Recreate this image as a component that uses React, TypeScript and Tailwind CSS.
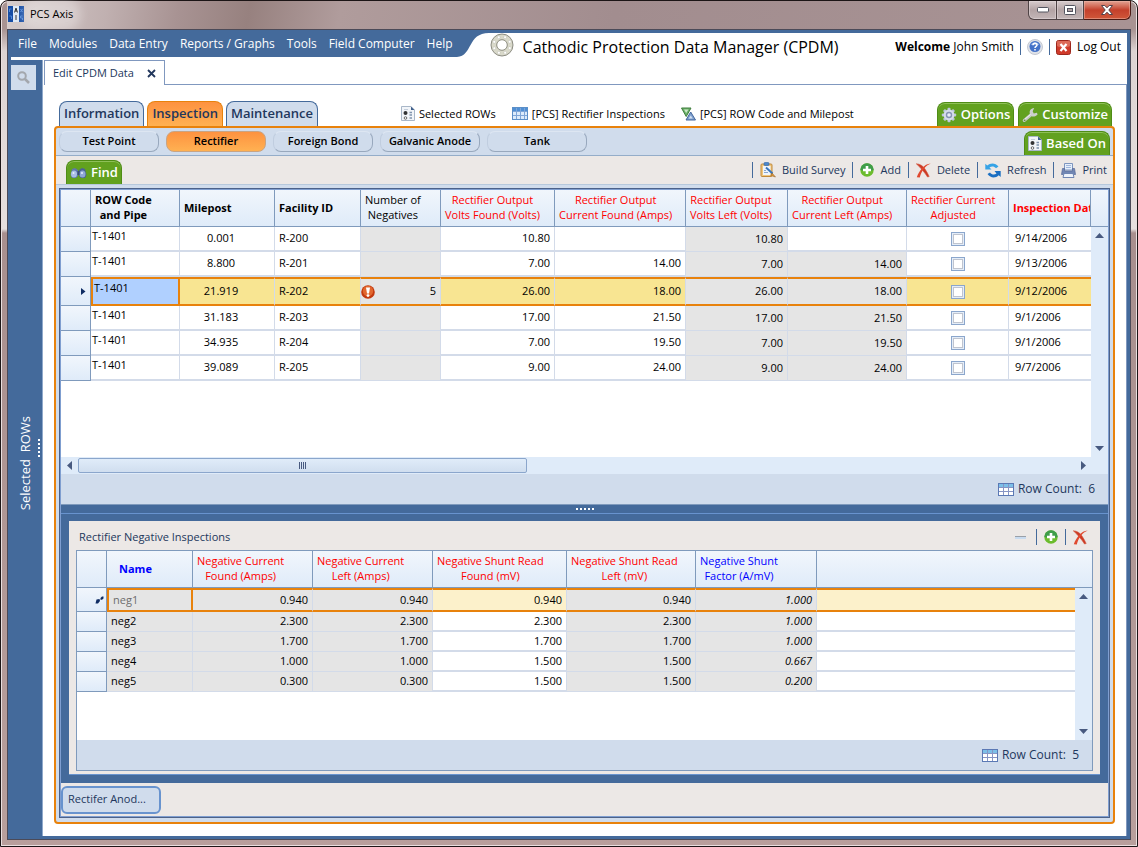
import { useState } from 'react';
import type { ReactNode } from 'react';
import clsx from 'clsx';

type Inspection = {
  row: string;
  milepost: string;
  facility: string;
  negatives?: number;
  voltsFound: string;
  currentFound: string;
  voltsLeft: string;
  currentLeft: string;
  date: string;
};

const INSPECTIONS: Inspection[] = [
  { row: 'T-1401', milepost: '0.001', facility: 'R-200', voltsFound: '10.80', currentFound: '', voltsLeft: '10.80', currentLeft: '', date: '9/14/2006' },
  { row: 'T-1401', milepost: '8.800', facility: 'R-201', voltsFound: '7.00', currentFound: '14.00', voltsLeft: '7.00', currentLeft: '14.00', date: '9/13/2006' },
  { row: 'T-1401', milepost: '21.919', facility: 'R-202', negatives: 5, voltsFound: '26.00', currentFound: '18.00', voltsLeft: '26.00', currentLeft: '18.00', date: '9/12/2006' },
  { row: 'T-1401', milepost: '31.183', facility: 'R-203', voltsFound: '17.00', currentFound: '21.50', voltsLeft: '17.00', currentLeft: '21.50', date: '9/1/2006' },
  { row: 'T-1401', milepost: '34.935', facility: 'R-204', voltsFound: '7.00', currentFound: '19.50', voltsLeft: '7.00', currentLeft: '19.50', date: '9/1/2006' },
  { row: 'T-1401', milepost: '39.089', facility: 'R-205', voltsFound: '9.00', currentFound: '24.00', voltsLeft: '9.00', currentLeft: '24.00', date: '9/7/2006' },
];

const NEGATIVES = [
  { name: 'neg1', values: ['0.940', '0.940', '0.940', '0.940'], factor: '1.000' },
  { name: 'neg2', values: ['2.300', '2.300', '2.300', '2.300'], factor: '1.000' },
  { name: 'neg3', values: ['1.700', '1.700', '1.700', '1.700'], factor: '1.000' },
  { name: 'neg4', values: ['1.000', '1.000', '1.500', '1.500'], factor: '0.667' },
  { name: 'neg5', values: ['0.300', '0.300', '1.500', '1.500'], factor: '0.200' },
];

const MENU = ['File', 'Modules', 'Data Entry', 'Reports / Graphs', 'Tools', 'Field Computer', 'Help'];
const SUB_TABS = ['Test Point', 'Rectifier', 'Foreign Bond', 'Galvanic Anode', 'Tank'];

const MAIN_HEADERS: { lines: string[]; className: string }[] = [
  { lines: ['ROW Code', 'and Pipe'], className: 'pl-1 font-bold' },
  { lines: ['Milepost'], className: 'pl-1 font-bold' },
  { lines: ['Facility ID'], className: 'pl-1 font-bold' },
  { lines: ['Number of', 'Negatives'], className: 'pl-1 font-normal' },
  { lines: ['Rectifier Output', 'Volts Found (Volts)'], className: 'pl-1 font-normal text-[#ff0000]' },
  { lines: ['Rectifier Output', 'Current Found (Amps)'], className: 'pl-1 font-normal text-[#ff0000]' },
  { lines: ['Rectifier Output', 'Volts Left (Volts)'], className: 'pl-1 font-normal text-[#ff0000]' },
  { lines: ['Rectifier Output', 'Current Left (Amps)'], className: 'pl-1 font-normal text-[#ff0000]' },
  { lines: ['Rectifier Current', 'Adjusted'], className: 'pl-1 font-normal text-[#ff0000]' },
  { lines: ['Inspection Date'], className: 'pl-1 font-bold text-[#ff0000]' },
];

const NEG_HEADERS: { lines: string[]; className: string }[] = [
  { lines: ['Name'], className: 'pl-3 font-bold text-[#0000ff]' },
  { lines: ['Negative Current', 'Found (Amps)'], className: 'pl-1 font-normal text-[#ff0000]' },
  { lines: ['Negative Current', 'Left (Amps)'], className: 'pl-1 font-normal text-[#ff0000]' },
  { lines: ['Negative Shunt Read', 'Found (mV)'], className: 'pl-1 font-normal text-[#ff0000]' },
  { lines: ['Negative Shunt Read', 'Left (mV)'], className: 'pl-1 font-normal text-[#ff0000]' },
  { lines: ['Negative Shunt', 'Factor (A/mV)'], className: 'pl-1 font-normal text-[#0000ff]' },
];

const headCell = 'h-[37px] border-r border-b border-[#7f9abc] bg-linear-to-b from-[#f1f6fc] to-[#dfebf9] py-0 pr-0 text-left';
const rowHead = 'border-r border-b border-[#7f9abc] bg-linear-to-b from-[#f1f6fc] to-[#dfebf9] p-0 text-right';
const greenTab = 'flex h-6 items-center gap-1 rounded-t-lg border border-b-0 border-[#4f8c16] bg-[#62a11f] px-[3px] text-[13px] font-semibold text-white shadow-[inset_0_1px_0_#8fc058]';

const selectedY = 'border-y-2 border-y-[#e8820c]';
const sideLine = 'border-r border-r-[#d3dbe9]';

/* Icons */

function AppIcon() {
  return (
    <svg width="16" height="16" viewBox="0 0 16 16">
      <rect width="5" height="16" y="0" fill="#174da4" />
      <rect width="6" height="16" x="5" fill="#dfe9f5" />
      <rect width="5" height="16" x="11" fill="#174da4" />
      <path d="M1.5 3h2M1.5 3v3M1.5 10h2v3M12.5 3l2 3M14.5 3l-2 3M14.5 10h-2v2h2v2" stroke="#4f87d8" fill="none" />
      <path d="M6.5 6.500 8 2l1.500 4.500M7 5h2M8 9v5" stroke="#333" fill="none" />
    </svg>
  );
}

function FlangeIcon() {
  const bolts = [0, 45, 90, 135, 180, 225, 270, 315];
  return (
    <svg width="24" height="24" viewBox="0 0 24 24" className="shrink-0">
      <circle cx="12" cy="12" r="11" fill="#d9d9ca" stroke="#8d8d83" />
      <circle cx="12" cy="12" r="5.300" fill="#fff" stroke="#8c8c80" />
      {bolts.map((a) => (
        <circle key={a} cx="12" cy="3.700" r="1.400" fill="#fff" stroke="#b5b5aa" strokeWidth=".4" transform={`rotate(${a + 22} 12 12)`} />
      ))}
    </svg>
  );
}

function SheetIcon() {
  return (
    <svg width="14" height="15" viewBox="0 0 14 15">
      <path d="M.5.500h9.500l3.500 3.500v10.500H.5z" fill="#f2f5f9" stroke="#a9b7c8" />
      <path d="M10 .5v3.500h3.500z" fill="#3f5f8a" />
      <circle cx="4.500" cy="7" r="2" fill="#333" />
      <circle cx="4.500" cy="12" r="1.300" fill="#fff" stroke="#666" />
      <path d="M3 3.500h4" stroke="#c4cedb" />
      <path d="M8.500 6.500h2.500M8.500 9h2.500M8.500 12h2.500" stroke="#8094ad" strokeWidth="1.500" />
    </svg>
  );
}

function GridIcon() {
  return (
    <svg width="16" height="13" viewBox="0 0 16 13">
      <rect x=".5" y=".5" width="15" height="12" fill="#fff" stroke="#5b79b5" />
      <rect x="1" y="1" width="14" height="3" fill="#7cbfe8" />
      <path d="M1 4.500h14M1 8.500h14M5.500 1v11M10.500 1v11" stroke="#8795c4" />
    </svg>
  );
}

function BlueGridIcon() {
  return (
    <svg width="16" height="13" viewBox="0 0 16 13">
      <rect x=".5" y=".5" width="15" height="12" fill="#dcebfb" stroke="#5b8fc8" />
      <rect x="1" y="1" width="14" height="3" fill="#4f8fd4" />
      <path d="M1 4.500h14M1 8.500h14M4.500 1v11M8.500 1v11M12.500 1v11" stroke="#7fa6d8" />
    </svg>
  );
}

function TrianglesIcon() {
  return (
    <svg width="15" height="14" viewBox="0 0 15 14">
      <path d="M.5 1h9.500L5.200 9.500z" fill="#6cb26a" stroke="#3f7d3c" />
      <path d="M3 2.500h4.500L5.200 6z" fill="#cfe8c8" />
      <path d="M9.700 5l4.800 8H5z" fill="#7ea0cf" stroke="#44679c" />
      <path d="M9.700 8.500l2 3h-4z" fill="#d3e0f2" />
    </svg>
  );
}

function GearIcon() {
  return (
    <svg width="16" height="16" viewBox="0 0 16 16">
      <g fill="#bcc6dc">
        {[0, 45, 90, 135].map((a) => (
          <rect key={a} x="6.500" y=".8" width="3" height="14.400" rx="1" transform={`rotate(${a} 8 8)`} />
        ))}
        <circle cx="8" cy="8" r="5.400" fill="#d5dceb" />
      </g>
      <circle cx="8" cy="8" r="3.200" fill="#8593b4" />
      <circle cx="8" cy="8" r="1.800" fill="#e8edf6" />
    </svg>
  );
}

function WrenchIcon() {
  return (
    <svg width="16" height="16" viewBox="0 0 16 16">
      <path d="M2.200 13.500l6.500-5.500" stroke="#c2c6c2" strokeWidth="3" strokeLinecap="round" />
      <path d="M12.200 1C8.500 1.500 7 4 8 7s4 3.500 7.500.7l-.5-1.900-3.300.7-1-2.300z" fill="#ccd0cc" />
      <path d="M2.500 12.500l6-5" stroke="#eef0ee" />
      <circle cx="2.700" cy="13.200" r=".8" fill="#5c8c2c" />
    </svg>
  );
}

function BinocularsIcon() {
  return (
    <svg width="17" height="12" viewBox="0 0 17 12">
      <path d="M2 2l3-1 3 2v6L6 11H2L.5 8z" fill="#5f78ab" />
      <path d="M15 2l-3-1-3 2v6l2 2h4l1.500-3z" fill="#4a6296" />
      <ellipse cx="4" cy="7" rx="3" ry="3.500" fill="#a9bfe6" />
      <ellipse cx="12.500" cy="7" rx="3" ry="3.500" fill="#8fa8d6" />
      <circle cx="3.500" cy="6" r="1" fill="#e8f0fc" />
      <circle cx="12" cy="6" r="1" fill="#e8f0fc" />
      <rect x="7.500" y="4" width="2" height="4" fill="#394e73" />
    </svg>
  );
}

function SurveyIcon() {
  return (
    <svg width="16" height="16" viewBox="0 0 16 16">
      <rect x="1" y="2" width="11" height="12.500" rx="1" fill="#f0c67c" stroke="#c08a3c" />
      <rect x="3" y="4" width="7.500" height="9" fill="#eff5fd" />
      <rect x="4" y=".5" width="5" height="3" rx="1" fill="#4b87cc" stroke="#2f66a8" strokeWidth=".6" />
      <path d="M4 10.500h4M4 8.500h2" stroke="#8ba7cd" />
      <path d="M6 5.500l6.500 6" stroke="#3976bd" strokeWidth="2" />
      <path d="M12 11l3.500 4-4.800-1.500z" fill="#e09a3d" stroke="#8a5a20" strokeWidth=".5" />
    </svg>
  );
}

function AddIcon() {
  return (
    <svg width="14" height="14" viewBox="0 0 14 14">
      <circle cx="7" cy="7" r="6.700" fill="#6cbc2d" />
      <path d="M.3 7a6.700 6.700 0 0 1 13.400 0c-4 1.500-9 1.500-13.400 0z" fill="#3f9d4a" />
      <path d="M7 3v8M3 7h8" stroke="#fff" strokeWidth="2.600" />
    </svg>
  );
}

function DeleteIcon() {
  return (
    <svg width="15" height="15" viewBox="0 0 15 15">
      <path d="M.3.800C4 .800 7 3 9 6c1.800 2.800 3 5 4.200 7.500l-1.700.5C9 10 5 5 .3.800z" fill="#cc3a24" stroke="#d4553e" strokeWidth=".6" />
      <path d="M14.800.600C9.500 2.500 5.500 8 3.800 14.500L.8 14.200C3.500 7.500 8 1 14.800.600z" fill="#e0492f" />
    </svg>
  );
}

function RefreshIcon() {
  return (
    <svg width="16" height="15" viewBox="0 0 16 15">
      <path d="M.3 6.500V.800l1.900 1.700C5.500-.500 10.500-.300 13.500 3.500L11 5.200C9 3 6.500 2.900 4.500 4.500l2 2z" fill="#36a3e6" />
      <path d="M15.700 8v6l-2-1.800C10.500 15.500 5.500 15.200 2.500 11L5 9.500c2 2.500 4.500 2.500 6.500 1L9.500 8z" fill="#1b6fc2" />
    </svg>
  );
}

function PrintIcon() {
  return (
    <svg width="15" height="15" viewBox="0 0 15 15">
      <path d="M3.500.500h8V7h-8z" fill="#e6effb" stroke="#7d95be" />
      <path d="M1.500 5.500h2v2.500h8V5.500h2l1 6h-14z" fill="#7287b4" stroke="#55699a" strokeWidth=".7" />
      <path d="M3 10.500h9l1 4H2z" fill="#eef3fb" stroke="#6f86b3" />
      <path d="M5 2.500h5M5 4.500h5" stroke="#9fb6dc" />
    </svg>
  );
}

function HelpIcon() {
  return (
    <svg width="16" height="16" viewBox="0 0 16 16">
      <circle cx="8" cy="8" r="7.500" fill="#dfe2e8" stroke="#c4c8d1" />
      <circle cx="8" cy="7.500" r="5.500" fill="#4472c8" />
      <path d="M3.500 6a5 5 0 0 1 9 0z" fill="#86a8e4" />
      <path d="M6 6.300c0-2.700 4-2.700 4-.3C10 7.500 8 7.300 8 9M8 10v1.400" stroke="#fff" strokeWidth="1.500" fill="none" />
    </svg>
  );
}

function LogOutIcon() {
  return (
    <svg width="15" height="15" viewBox="0 0 15 15">
      <rect x=".5" y=".5" width="14" height="14" rx="2" fill="#cf3a2a" stroke="#9d271c" />
      <path d="M1 2a1 1 0 0 1 1-1h11a1 1 0 0 1 1 1v4c-4 2-9 2-13 0z" fill="#de6a58" />
      <path d="M4.500 4l6 7M10.500 4l-6 7" stroke="#fff" strokeWidth="2.200" />
    </svg>
  );
}

function AlertIcon() {
  return (
    <svg width="14" height="14" viewBox="0 0 14 14">
      <circle cx="7" cy="7" r="6.800" fill="#c23a10" />
      <circle cx="7" cy="6" r="5.200" fill="#e2672f" />
      <path d="M5 2.500h4L8 8.500H6z" fill="#fff" />
      <circle cx="7" cy="10.600" r="1.400" fill="#fff" />
    </svg>
  );
}

function PencilMark() {
  return (
    <svg width="9" height="8" viewBox="0 0 9 8" className="mr-0.5 ml-auto">
      <path d="M5.500 2l1.500-1.500h1.500v2L7 3.800H5.500zM.5 7.500l1-4 3-.5.500 2L3 7.500z" fill="#0f2c63" />
    </svg>
  );
}

function Arrow({ dir }: { dir: 'up' | 'down' | 'left' | 'right' }) {
  const paths = { up: 'M0 7l4.500-5L9 7z', down: 'M0 2h9L4.500 7z', left: 'M7 0v9L2 4.500z', right: 'M2 0v9l5-4.500z' };
  return (
    <svg width="9" height="9" viewBox="0 0 9 9">
      <path d={paths[dir]} fill="#485a80" />
    </svg>
  );
}

/* Small pieces */

function Separator() {
  return <span className="h-4 w-px bg-[#446a9b]" />;
}

function ToolButton({ icon, children }: { icon: ReactNode; children: ReactNode }) {
  return (
    <button className="flex items-center gap-1.5 hover:underline">
      {icon}
      {children}
    </button>
  );
}

function HeaderCell({ lines, className }: { lines: string[]; className: string }) {
  return (
    <th className={clsx(headCell, 'overflow-hidden whitespace-nowrap', className)}>
      <span className="inline-block text-center">
        {lines.map((line) => <span key={line} className="block leading-[15px]">{line}</span>)}
      </span>
    </th>
  );
}

function RowCount({ count }: { count: number }) {
  return (
    <div className="flex h-[30px] items-center justify-end gap-1 bg-[#d0dcec] px-[13px] text-[12px] text-[#22375c]">
      <GridIcon />
      <span>Row Count:&nbsp; {count}</span>
    </div>
  );
}

function VerticalScroll() {
  return (
    <div className="flex w-[17px] shrink-0 flex-col">
      <div className="h-[37px] border-b border-[#7f9abc] bg-linear-to-b from-[#f1f6fc] to-[#dfebf9]" />
      <div className="flex flex-1 flex-col items-center justify-between bg-[#dfebf9] py-1">
        <button aria-label="Scroll up"><Arrow dir="up" /></button>
        <button aria-label="Scroll down"><Arrow dir="down" /></button>
      </div>
    </div>
  );
}

function MainGrid() {
  const [selected, setSelected] = useState(2);

  return (
    <div className="flex flex-1 bg-white">
      <div className="min-w-0 flex-1 overflow-hidden">
        <table className="w-full table-fixed border-separate border-spacing-0 text-[11px] text-black">
          <colgroup>
            <col className="w-[30px]" />
            <col className="w-[89px]" />
            <col className="w-[95px]" />
            <col className="w-[86px]" />
            <col className="w-[80px]" />
            <col className="w-[114px]" />
            <col className="w-[131px]" />
            <col className="w-[102px]" />
            <col className="w-[119px]" />
            <col className="w-[102px]" />
            <col />
          </colgroup>
          <thead>
            <tr>
              <th className={headCell} />
              {MAIN_HEADERS.map((h) => <HeaderCell key={h.lines.join()} {...h} />)}
            </tr>
          </thead>
          <tbody>
            {INSPECTIONS.map((r, i) => {
              const on = i === selected;
              const open = on ? `${selectedY} bg-[#f8e592]` : 'border-b-2 border-b-[#d3dbe9] bg-white';
              const locked = on ? `${selectedY} bg-[#e5e5e5]` : 'border-b border-b-[#d3dbe9] bg-[#e5e5e5]';
              return (
                <tr key={r.facility} onClick={() => setSelected(i)} className={on ? 'h-[29px]' : 'h-[25px]'}>
                  <td className={rowHead}>
                    {on && <svg width="5" height="7" viewBox="0 0 5 7" className="mr-1 ml-auto"><path d="M0 0v7l4.500-3.500z" fill="#0f2c63" /></svg>}
                  </td>
                  <td className={clsx('py-px pr-0 pl-px align-top leading-4', on ? 'border-2 border-[#e8820c] bg-[#b0d0ff]' : `${open} ${sideLine}`)}>{r.row}</td>
                  <td className={clsx('p-0 pr-3 text-center', sideLine, open)}>{r.milepost}</td>
                  <td className={clsx('p-0 pl-1', sideLine, open)}>{r.facility}</td>
                  <td className={clsx('p-0 pr-1', sideLine, locked)}>
                    {r.negatives && <span className="flex items-center justify-between"><AlertIcon />{r.negatives}</span>}
                  </td>
                  <td className={clsx('p-0 pr-1 text-right', sideLine, open)}>{r.voltsFound}</td>
                  <td className={clsx('p-0 pr-1 text-right', sideLine, open)}>{r.currentFound}</td>
                  <td className={clsx('p-0 pr-1 text-right', sideLine, locked)}>{r.voltsLeft}</td>
                  <td className={clsx('p-0 pr-1 text-right', sideLine, r.currentLeft ? locked : open)}>{r.currentLeft}</td>
                  <td className={clsx('p-0 text-center', sideLine, open)}>
                    <input
                      type="checkbox"
                      aria-label={`Rectifier current adjusted ${r.facility}`}
                      className="m-auto block h-[14px] w-[14px] appearance-none border border-[#8ba6cc] bg-white shadow-[inset_0_0_0_1px_#e4edf8,inset_0_0_0_2px_#bfc4cf] checked:bg-[#446a9b]"
                    />
                  </td>
                  <td className={clsx('p-0 pl-1.5', open)}>{r.date}</td>
                </tr>
              );
            })}
          </tbody>
        </table>
      </div>
      <VerticalScroll />
    </div>
  );
}

function NegativesGrid() {
  return (
    <div className="flex bg-white">
      <div className="min-w-0 flex-1 overflow-hidden pb-12">
        <table className="w-full table-fixed border-separate border-spacing-0 text-[11px] text-black">
          <colgroup>
            <col className="w-[30px]" />
            <col className="w-[86px]" />
            <col className="w-[120px]" />
            <col className="w-[120px]" />
            <col className="w-[134px]" />
            <col className="w-[129px]" />
            <col className="w-[121px]" />
            <col />
          </colgroup>
          <thead>
            <tr>
              <th className={headCell} />
              {NEG_HEADERS.map((h) => <HeaderCell key={h.lines.join()} {...h} />)}
              <th className="border-b border-[#7f9abc] bg-linear-to-b from-[#f1f6fc] to-[#dfebf9]" />
            </tr>
          </thead>
          <tbody>
            {NEGATIVES.map((n, i) => {
              const on = i === 0;
              const open = on ? `${selectedY} bg-[#fcf1cb]` : 'border-b-2 border-b-[#d3dbe9] bg-white';
              const locked = on ? `${selectedY} bg-[#e5e5e5]` : 'border-b border-b-[#d3dbe9] bg-[#e5e5e5]';
              return (
                <tr key={n.name} className={on ? 'h-6' : 'h-5'}>
                  <td className={rowHead}>{on && <PencilMark />}</td>
                  <td className={clsx('p-0 pl-1', on ? 'border-2 border-[#e8820c] bg-[#e5e5e5] text-[#6d6d6d]' : `${locked} ${sideLine}`)}>{n.name}</td>
                  {n.values.map((v, c) => (
                    <td key={c} className={clsx('p-0 pr-1 text-right', sideLine, c === 2 ? open : locked)}>{v}</td>
                  ))}
                  <td className={clsx('p-0 pr-1 text-right italic', sideLine, locked)}>{n.factor}</td>
                  <td className={clsx('p-0', open)} />
                </tr>
              );
            })}
          </tbody>
        </table>
      </div>
      <VerticalScroll />
    </div>
  );
}

function TitleBar() {
  const button = 'flex items-center justify-center border border-t-0 border-[#4f4345] bg-linear-to-b from-[#d8cccd] via-[#b3a3a4] to-[#c3b6b7] shadow-[inset_0_0_0_1px_#e5dcdd80]';
  return (
    <div className="flex h-7 items-start justify-between bg-[linear-gradient(100deg,#d6cccb_0,#c0b0b0_100px,#a89393_170px,#97817f_240px,#b09c9c_330px,#a28d8f_600px,#a89394_100%)] pl-px">
      <div className="flex items-center gap-[6px] pt-[5px] text-[11px] text-black">
        <AppIcon />
        <span className="rounded-full bg-white/30 shadow-[0_0_10px_8px_rgba(255,255,255,0.3)]">PCS Axis</span>
      </div>
      <div className="flex h-[19px]">
        <button aria-label="Minimize" className={clsx(button, 'w-[29px] rounded-bl-md')}>
          <svg width="12" height="6" viewBox="0 0 12 6"><rect x=".5" y=".5" width="11" height="4.500" rx="1" fill="#fff" stroke="#53545f" /></svg>
        </button>
        <button aria-label="Maximize" className={clsx(button, 'w-[27px] border-l-0')}>
          <svg width="12" height="10" viewBox="0 0 12 10"><rect x=".5" y=".5" width="11" height="9" rx="1" fill="#fff" stroke="#53545f" /><rect x="3.500" y="3.500" width="5" height="3" fill="#b3a3a4" stroke="#53545f" /></svg>
        </button>
        <button aria-label="Close" className="flex w-[47px] items-center justify-center rounded-br-md border border-t-0 border-l-0 border-[#4c1a14] bg-linear-to-b from-[#e2a293] via-[#c4402b] to-[#d0573a] shadow-[inset_0_0_0_1px_#f0b9a980]">
          <svg width="12" height="10" viewBox="0 0 12 10"><path d="M.5.500h3.300L6 2.800 8.200.500h3.300L7.800 5l3.700 4.500H8.200L6 7.200 3.800 9.500H.5L4.200 5z" fill="#fff" stroke="#53424a" /></svg>
        </button>
      </div>
    </div>
  );
}

function Header() {
  return (
    <header className="flex h-6 text-[12px]">
      <nav className="flex gap-3 pl-[10px] whitespace-nowrap text-white">
        {MENU.map((m) => <button key={m} className="h-[22px] hover:underline">{m}</button>)}
      </nav>
      <svg width="37" height="24" viewBox="0 0 37 24" className="shrink-0">
        <path d="M4 24C20 23 14 0 36 0h1v24z" fill="#fff" />
      </svg>
      <div className="mr-[3px] flex flex-1 items-center bg-white pr-1.5 whitespace-nowrap text-black">
        <FlangeIcon />
        <h1 className="flex-1 pt-1 pl-[9px] text-[16px] leading-5">Cathodic Protection Data Manager (CPDM)</h1>
        <div className="flex items-center gap-1.5 pt-1">
          <span><b>Welcome</b> John Smith</span>
          <Separator />
          <a href="#help" aria-label="Help"><HelpIcon /></a>
          <Separator />
          <a href="#logout" className="flex items-center gap-1.5"><LogOutIcon />Log Out</a>
        </div>
      </div>
    </header>
  );
}

function Sidebar() {
  return (
    <aside className="flex w-[35px] shrink-0 border-r border-[#8fa9cb] pl-[3px] text-white">
      <div className="flex w-[25px] flex-col items-center pt-[5px]">
        <button aria-label="Search" className="flex h-[25px] w-[25px] items-center justify-center bg-[#d0dcec]">
          <svg width="13" height="13" viewBox="0 0 13 13"><circle cx="5" cy="5" r="3.800" fill="none" stroke="#a3a7ad" strokeWidth="2" /><path d="M8 8l4 4" stroke="#a3a7ad" strokeWidth="2.500" /></svg>
        </button>
        <div className="flex flex-1 items-center pl-1">
          <button className="rotate-180 text-[13px] [writing-mode:vertical-rl]">Selected&nbsp; ROWs</button>
        </div>
      </div>
      <div className="flex flex-1 flex-col items-center justify-center gap-0.5">
        {[0, 1, 2, 3, 4].map((d) => <span key={d} className="h-0.5 w-0.5 bg-white" />)}
      </div>
    </aside>
  );
}

export default function App() {
  const [subTab, setSubTab] = useState('Rectifier');
  const blueTab = 'h-[25px] rounded-t-lg border border-b-0 border-[#446a9b] bg-[#d0dcec] px-1 text-[13px] font-semibold text-[#22375c]';

  return (
    <div className="flex min-h-screen flex-col rounded-t-lg border border-[#1c1516] bg-[linear-gradient(180deg,#a89392_0,#a89392_28px,#ddd3d2_50px,#e6dfde_228px,#a88f8e_232px,#b89f9c_100%)] px-1.5 pb-1.5 font-['Open_Sans','Noto_Sans',sans-serif] shadow-[inset_0_0_0_1px_#e9dfdf]">
      <TitleBar />
      <div className="flex flex-1 flex-col border border-[#4b4a58] bg-[#446a9b] py-[3px]">
        <Header />
        <div className="mr-[3px] ml-[3px] h-[3px] bg-white" />

        <div className="mr-[3px] flex flex-1">
          <Sidebar />
          <main className="flex min-w-0 flex-1 flex-col bg-white">
            {/* Document tab */}
            <div className="flex h-[25px] items-stretch pl-px">
              <div className="flex w-[121px] items-center justify-between border border-b-0 border-[#8098bf] px-2 text-[11px] text-[#22375c]">
                Edit CPDM Data
                <button aria-label="Close tab">
                  <svg width="9" height="9" viewBox="0 0 9 9"><path d="M1 1l7 7M8 1L1 8" stroke="#22375c" strokeWidth="1.800" /></svg>
                </button>
              </div>
              <div className="flex-1 border-b border-[#8098bf]" />
            </div>

            <div className="flex flex-1 flex-col border-r border-[#8098bf] px-[11px] pt-4 pb-3">
              {/* Main tabs */}
              <div className="flex items-end justify-between pr-[3px] pl-[5px] whitespace-nowrap">
                <div className="flex gap-[3px]">
                  <button className={blueTab}>Information</button>
                  <button className="h-[25px] rounded-t-lg border border-b-0 border-[#e8820c] bg-linear-to-b from-[#fd9240] to-[#ffb152] px-1 text-[13px] font-semibold text-[#22375c]">Inspection</button>
                  <button className={blueTab}>Maintenance</button>
                </div>
                <div className="flex items-center gap-4 pb-1 text-[11px] text-black">
                  <a href="#rows" className="flex items-center gap-1"><SheetIcon />Selected ROWs</a>
                  <a href="#inspections" className="flex items-center gap-1"><BlueGridIcon />[PCS] Rectifier Inspections</a>
                  <a href="#milepost" className="flex items-center gap-1"><TrianglesIcon />[PCS] ROW Code and Milepost</a>
                </div>
                <div className="flex gap-1">
                  <button className={greenTab}><GearIcon />Options</button>
                  <button className={greenTab}><WrenchIcon />Customize</button>
                </div>
              </div>

              <div className="flex flex-1 flex-col rounded-[4px] border-2 border-[#e8820c] bg-[#d0dcec]">
                {/* Sub tabs */}
                <div className="flex h-7 items-end justify-between border-b border-[#94adc9] pr-[3px] pl-[3px]">
                  <div className="flex gap-[7px] pb-[3px]">
                    {SUB_TABS.map((t) => (
                      <button
                        key={t}
                        onClick={() => setSubTab(t)}
                        className={clsx(
                          'h-[21px] w-[100px] rounded-lg border text-[11px] font-semibold text-black',
                          t === subTab
                            ? 'border-[#c9a483] bg-linear-to-b from-[#fd9240] to-[#ffb152]'
                            : 'border-t-[#dde6f2] border-r-[#98a8bd] border-b-[#98a8bd] border-l-[#c0cddf]',
                        )}
                      >
                        {t}
                      </button>
                    ))}
                  </div>
                  <button className={greenTab}><SheetIcon />Based On</button>
                </div>

                {/* Toolbar */}
                <div className="flex h-7 items-end justify-between bg-[#ece8e6] pr-1.5 pl-[10px] text-[11px] text-[#22375c]">
                  <button className={greenTab}><BinocularsIcon />Find</button>
                  <div className="flex h-full items-center gap-[7px]">
                    <Separator />
                    <ToolButton icon={<SurveyIcon />}>Build Survey</ToolButton>
                    <Separator />
                    <ToolButton icon={<AddIcon />}>Add</ToolButton>
                    <Separator />
                    <ToolButton icon={<DeleteIcon />}>Delete</ToolButton>
                    <Separator />
                    <ToolButton icon={<RefreshIcon />}>Refresh</ToolButton>
                    <Separator />
                    <ToolButton icon={<PrintIcon />}>Print</ToolButton>
                  </div>
                </div>

                <div className="mb-1 flex flex-1 flex-col border-t border-[#b6c8dc] px-[3px] pt-[3px]">
                  <div className="flex flex-1 flex-col border border-[#4d6289]">
                    <div className="flex flex-1 flex-col border border-[#7f9ed0]">
                      <MainGrid />
                      <div className="flex h-[17px] items-center bg-[#dfebf9] pr-5 pl-1">
                        <button aria-label="Scroll left"><Arrow dir="left" /></button>
                        <div className="flex-1 px-1">
                          <div className="flex h-[15px] w-[45%] items-center justify-center gap-px rounded-xs border border-[#8ba6cc] bg-linear-to-b from-[#e0ecf9] to-[#d0deef]">
                            {[0, 1, 2, 3].map((g) => <span key={g} className="h-[7px] w-px bg-[#485a80]" />)}
                          </div>
                        </div>
                        <button aria-label="Scroll right"><Arrow dir="right" /></button>
                      </div>
                      <RowCount count={6} />

                      {/* Splitter and detail panel */}
                      <div className="border-t border-[#7f9abc] bg-[#446a9b] pb-2">
                        <div className="flex h-2 items-center justify-center gap-0.5">
                          {[0, 1, 2, 3, 4].map((d) => <span key={d} className="h-0.5 w-0.5 bg-white" />)}
                        </div>
                        <div className="border-t border-[#6893ce] px-2 pt-[7px]">
                          <section className="border-b border-[#6893ce] bg-[#ece8e6] px-[7px] pb-[3px]">
                            <div className="flex h-[29px] items-center justify-between pt-[3px] pr-[5px] pl-[3px] text-[11px] text-[#22375c]">
                              <h2>Rectifier Negative Inspections</h2>
                              <div className="flex items-center gap-[7px]">
                                <button aria-label="Collapse" className="mr-[3px] h-[3px] w-[11px] border-t border-[#9aa0a8] bg-[#c8dbf0]" />
                                <Separator />
                                <button aria-label="Add negative"><AddIcon /></button>
                                <Separator />
                                <button aria-label="Delete negative"><DeleteIcon /></button>
                              </div>
                            </div>
                            <div className="border border-[#7f9abc]">
                              <NegativesGrid />
                              <RowCount count={5} />
                            </div>
                          </section>
                        </div>
                      </div>

                      <div className="flex h-[33px] items-center bg-[#ece8e6]">
                        <button className="h-7 w-[100px] rounded-md border-2 border-[#6893ce] bg-[#d0dcec] px-[5px] text-left text-[11px] text-[#22375c]">Rectifer Anod...</button>
                      </div>
                    </div>
                  </div>
                </div>
              </div>
            </div>
          </main>
        </div>
      </div>
    </div>
  );
}
